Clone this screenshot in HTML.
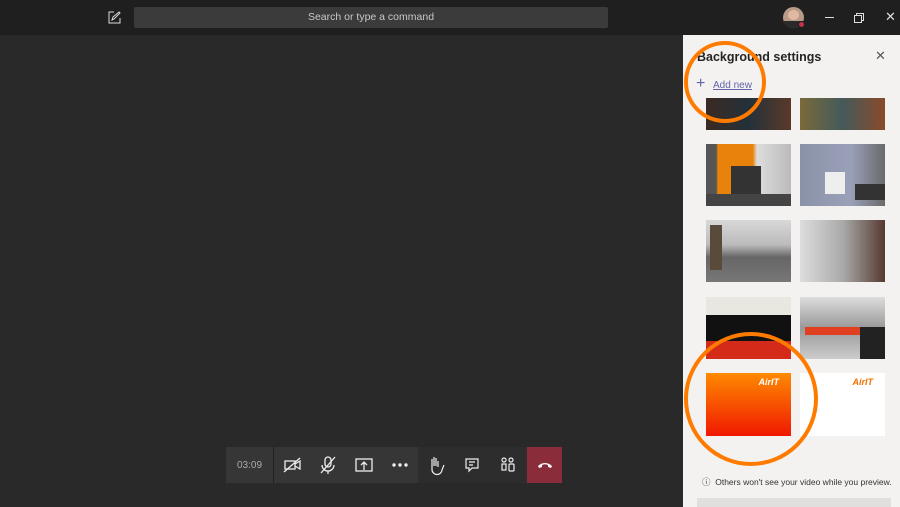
<!DOCTYPE html>
<html style="overflow:hidden;width:900px;height:507px"><head><meta charset="utf-8"><style>
*{margin:0;padding:0;box-sizing:border-box}
body{width:900px;height:507px;overflow:hidden;background:#292929;font-family:"Liberation Sans",sans-serif;position:relative}
.top{position:absolute;left:0;top:0;width:900px;height:35px;background:#1f1f1f}
.search{position:absolute;left:134px;top:7px;width:474px;height:21px;background:#3b3b3b;border-radius:2px;color:#c8c8c8;font-size:10.5px;text-align:center;line-height:21px}
.panel{position:absolute;left:683px;top:35px;width:217px;height:472px;background:#f3f2f1;overflow:hidden}
.t{position:absolute;width:85px;height:62px;overflow:hidden}
.tb{position:absolute;top:447px;height:36px}
.ic{position:absolute;top:0;width:36px;height:36px}
</style></head><body>
<div class="top">
<svg style="position:absolute;left:108px;top:11px" width="13" height="13" viewBox="0 0 13 13" fill="none" stroke="#ddd" stroke-width="1"><path d="M6 1H1v11h11V7"/><path d="M4 9l1-3 6-5 1 1-6 6z"/></svg>
<div class="search">Search or type a command</div>
<div style="position:absolute;left:783px;top:7px;width:21px;height:21px;border-radius:50%;background:#b89a88;overflow:hidden"><div style="position:absolute;left:5px;top:3px;width:11px;height:10px;border-radius:50%;background:#e0b9a0"></div><div style="position:absolute;left:1px;top:14px;width:19px;height:9px;background:#2a2a2a"></div></div>
<div style="position:absolute;left:798px;top:21px;width:7px;height:7px;border-radius:50%;background:#c4314b;border:1px solid #1f1f1f"></div>
<div style="position:absolute;left:825px;top:17px;width:9px;height:1px;background:#ddd"></div>
<div style="position:absolute;left:856px;top:13px;width:8px;height:8px;border:1px solid #ddd"></div>
<div style="position:absolute;left:854px;top:15px;width:8px;height:8px;border:1px solid #ddd;background:#1f1f1f"></div>
<div style="position:absolute;left:885px;top:9px;color:#ddd;font-size:13px">✕</div>
</div>

<div class="panel">
<div style="position:absolute;left:14px;top:15px;font-size:12.5px;font-weight:bold;color:#252423">Background settings</div>
<div style="position:absolute;left:192px;top:13px;font-size:13px;color:#555">✕</div>
<div style="position:absolute;left:13px;top:40px;font-size:16px;color:#6264a7">+</div>
<div style="position:absolute;left:30px;top:45px;font-size:10px;color:#6264a7;text-decoration:underline">Add new</div>
<div class="t" style="left:23px;top:63px;height:32px;background:linear-gradient(90deg,#3a2a22,#24313a,#5a3a28)"></div>
<div class="t" style="left:117px;top:63px;height:32px;background:linear-gradient(90deg,#7a6a3a,#445a5a,#8a4a2a)"></div>
<div class="t" style="left:23px;top:109px;background:linear-gradient(90deg,#555 0,#555 12%,#e8820a 14%,#e8820a 55%,#ddd 60%,#bbb);"><div style="position:absolute;left:25px;top:22px;width:30px;height:30px;background:#333"></div><div style="position:absolute;left:0;top:50px;width:85px;height:12px;background:#444"></div></div>
<div class="t" style="left:117px;top:109px;background:linear-gradient(90deg,#8a92a8,#9aa0b8 60%,#6a6a6a)"><div style="position:absolute;left:25px;top:28px;width:20px;height:22px;background:#eee"></div><div style="position:absolute;left:55px;top:40px;width:30px;height:16px;background:#333"></div></div>
<div class="t" style="left:23px;top:185px;background:linear-gradient(180deg,#d8d8d8,#bbb 40%,#666 60%,#777)"><div style="position:absolute;left:4px;top:5px;width:12px;height:45px;background:#5a4a3a"></div></div>
<div class="t" style="left:117px;top:185px;background:linear-gradient(90deg,#ddd,#aaa 50%,#553a30)"></div>
<div class="t" style="left:23px;top:262px;background:#111"><div style="position:absolute;left:0;top:0;width:85px;height:18px;background:#e8e8e0"></div><div style="position:absolute;left:0;top:44px;width:85px;height:18px;background:#d42a1a"></div></div>
<div class="t" style="left:117px;top:262px;background:linear-gradient(180deg,#ddd,#999 50%,#ccc)"><div style="position:absolute;left:5px;top:30px;width:60px;height:8px;background:#e04020"></div><div style="position:absolute;left:60px;top:30px;width:25px;height:32px;background:#222"></div></div>
<div class="t" style="left:23px;top:338px;height:63px;background:linear-gradient(180deg,#ff8a00,#f01800)"><div style="position:absolute;right:12px;top:4px;color:#fff;font-size:9px;font-weight:bold;font-style:italic">AirIT</div></div>
<div class="t" style="left:117px;top:338px;height:63px;background:#fff"><div style="position:absolute;right:12px;top:4px;color:#f07000;font-size:9px;font-weight:bold;font-style:italic">AirIT</div></div>
<div style="position:absolute;left:19px;top:441px;font-size:8.5px;color:#333">ⓘ&nbsp; Others won't see your video while you preview.</div>
<div style="position:absolute;left:14px;top:463px;width:194px;height:9px;background:#e1dfdd"></div>
</div>

<svg style="position:absolute;left:0;top:0" width="900" height="507"><circle cx="725" cy="82" r="39" fill="none" stroke="#ff7b00" stroke-width="4"/><circle cx="751" cy="399" r="65" fill="none" stroke="#ff7b00" stroke-width="4"/></svg>

<div class="tb" style="left:226px;width:192px;background:#363636">
<div style="position:absolute;left:0;top:0;width:48px;height:36px;border-right:1px solid #222;color:#aaa;font-size:10px;line-height:38px;text-align:center">03:09</div>
<svg class="ic" style="left:48px" viewBox="0 0 36 36" fill="none" stroke="#eee" stroke-width="1.3"><rect x="11" y="14" width="10" height="8"/><path d="M21 17l5-3v8l-5-3M10 25l16-14"/></svg>
<svg class="ic" style="left:84px" viewBox="0 0 36 36" fill="none" stroke="#eee" stroke-width="1.3"><rect x="15" y="10" width="6" height="10" rx="3"/><path d="M12 18a6 6 0 0012 0M18 24v3M11 26l14-16"/></svg>
<svg class="ic" style="left:120px" viewBox="0 0 36 36" fill="none" stroke="#eee" stroke-width="1.3"><rect x="10" y="12" width="16" height="12"/><path d="M18 23v-8M15 18l3-3 3 3"/></svg>
<svg class="ic" style="left:156px" viewBox="0 0 36 36" fill="#eee"><circle cx="12" cy="18" r="1.7"/><circle cx="18" cy="18" r="1.7"/><circle cx="24" cy="18" r="1.7"/></svg>
</div>
<div class="tb" style="left:418px;width:109px;background:#2d2d2d">
<svg class="ic" style="left:0" viewBox="0 0 36 36" fill="none" stroke="#eee" stroke-width="1.2"><path d="M14 20v-8M16 19v-9M18 19v-8M20 20v-6M14 18v4a5 5 0 0010 1l2-5"/></svg>
<svg class="ic" style="left:36px" viewBox="0 0 36 36" fill="none" stroke="#eee" stroke-width="1.2"><path d="M12 12h12v9h-6l-3 3v-3h-3z M15 15h6M15 18h4"/></svg>
<svg class="ic" style="left:72px" viewBox="0 0 36 36" fill="none" stroke="#eee" stroke-width="1.2"><circle cx="14" cy="13" r="2"/><circle cx="21" cy="13" r="2"/><rect x="12" y="17" width="4" height="6"/><rect x="19" y="17" width="5" height="7" rx="1"/></svg>
</div>
<div class="tb" style="left:527px;width:35px;background:#8b2c3b">
<svg class="ic" style="left:0" viewBox="0 0 36 36" fill="#fff"><path d="M11 19c4-4 10-4 14 0l-1 2-3-1v-2c-2-1-4-1-6 0v2l-3 1z"/></svg>
</div>
</body></html>
